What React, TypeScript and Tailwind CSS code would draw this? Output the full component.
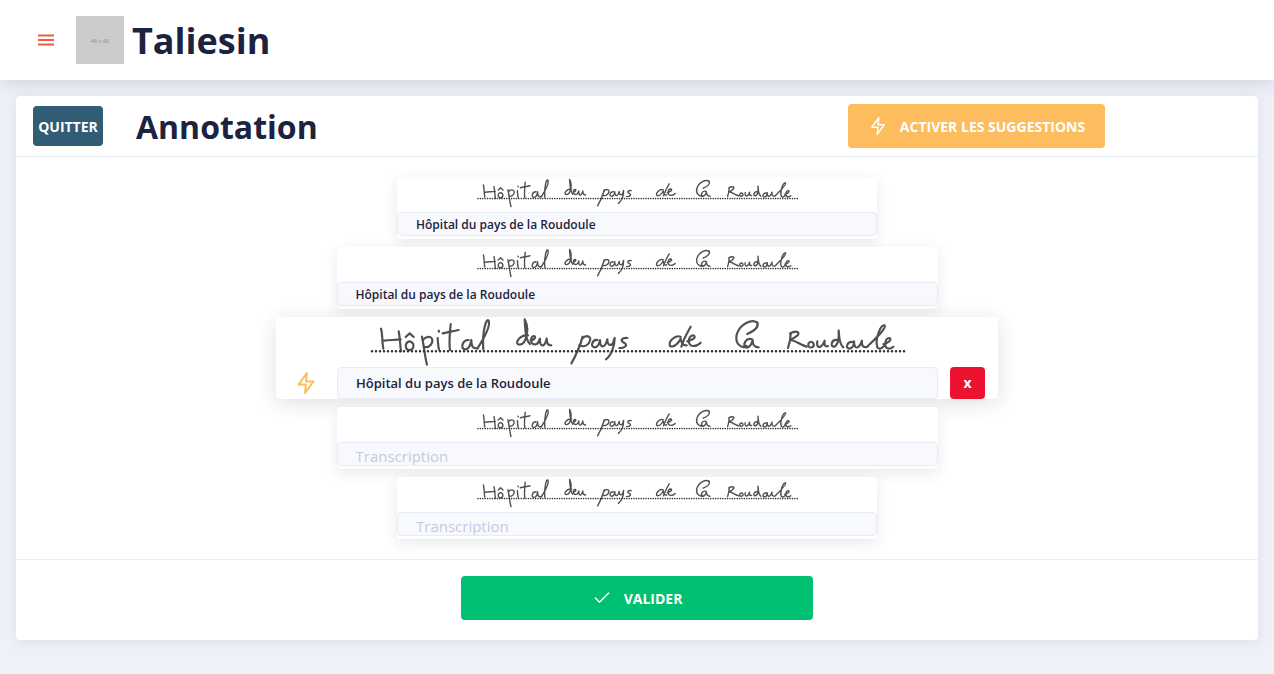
import { Check } from 'lucide-react'

const font = { fontFamily: '"Open Sans", sans-serif' }

// the scanned handwriting of the reference is a picture, so it is sketched as pen strokes
const leftStrokes = [
  'M33 38C38 55 36 80 40 98',
  'M42 74C58 72 74 72 92 70',
  'M86 46C90 65 90 85 93 106',
  'M107 63L119 52L131 63',
  'M118 76C103 80 104 104 120 102C134 100 134 78 118 76',
  'M156 62C162 90 164 120 171 146',
  'M158 72C172 56 192 62 186 80C182 92 170 96 162 92',
  'M203 66C204 78 204 90 207 101',
  'M206 44L207 47',
  'M242 24C240 50 236 78 240 102',
  'M218 52C234 48 250 46 266 42',
  'M296 72C276 72 270 100 286 100C298 100 302 84 304 72C304 86 306 100 322 96',
  'M322 98C340 70 362 30 356 14C348 4 336 50 340 100',
  'M474 58C446 56 432 86 448 86C462 86 470 66 472 40C472 28 468 18 464 10C466 40 466 70 480 84',
  'M482 72C492 74 500 62 492 60C478 60 480 92 500 84C504 82 508 74 510 68C510 80 510 90 520 88C526 84 528 76 530 68C530 78 532 88 544 88',
  'M638 62C630 90 616 122 604 142',
  'M636 68C650 54 670 62 656 82C648 92 636 92 628 88',
  'M682 72C666 70 660 94 674 94C684 94 688 82 690 72C690 84 692 94 702 90C708 86 710 78 712 70C712 82 716 92 728 84C732 74 732 68 734 66C734 90 724 118 708 130',
  'M772 66C760 64 746 72 762 80C774 86 768 96 748 96',
]

const rightStrokes = [
  'M152 32C142 50 130 70 124 92',
  'M122 62C104 56 84 78 90 90C100 96 116 82 122 68C124 82 130 90 140 88',
  'M142 76C156 72 172 64 160 58C144 58 140 90 160 90C168 90 176 86 182 80',
  'M352 20C336 8 300 22 290 56C284 84 306 100 320 90',
  'M352 20C358 34 340 46 322 54',
  'M336 70C318 64 308 84 316 94C326 98 336 84 338 72C338 84 340 94 356 94',
  'M452 54C452 68 448 84 444 96',
  'M450 52C468 42 486 48 468 62C462 66 454 70 450 72C466 72 482 88 500 92',
  'M512 78C500 80 504 98 516 94C526 90 520 76 512 78',
  'M532 76C530 86 532 96 542 92C548 88 552 80 554 74C552 84 554 94 564 90',
  'M590 72C574 70 570 94 582 92C592 90 598 70 596 44C598 60 596 82 610 94',
  'M638 78C622 76 614 96 628 98C638 98 642 86 642 76C642 88 646 100 656 92C662 86 664 80 666 74C664 86 668 98 682 92',
  'M684 90C708 66 740 36 734 28C722 24 704 70 712 94C718 102 726 96 732 90',
  'M730 84C744 82 758 70 748 66C734 66 730 96 746 98C752 98 756 96 760 92',
]

function Handwriting({ big }: { big?: boolean }) {
  return (
    <svg
      viewBox="-9 3 1620 150"
      role="img"
      aria-label="Ligne manuscrite"
      className={big ? 'h-[50px] w-[540px] shrink-0 blur-[0.7px]' : 'mt-px h-[30px] w-[324px] shrink-0 blur-[0.4px]'}
    >
      <g fill="none" stroke="#505050" strokeLinecap="round" strokeLinejoin="round" strokeWidth={big ? 6.5 : 7}>
        {leftStrokes.map((d) => (
          <path key={d} d={d} />
        ))}
        <g transform="translate(810 0)">
          {rightStrokes.map((d) => (
            <path key={d} d={d} />
          ))}
        </g>
        <path d="M6 106H1606" stroke="#333333" strokeWidth={big ? 7.5 : 8} strokeDasharray="0 12" />
      </g>
    </svg>
  )
}

function Bolt({ className }: { className: string }) {
  return (
    <svg viewBox="0 0 24 24" fill="none" stroke="currentColor" strokeLinejoin="round" strokeLinecap="round" className={className}>
      <path d="M13 2L4.5 13.5H12L11 22L19.5 10.5H12Z" />
    </svg>
  )
}

function SmallRow({ width, value }: { width: string; value?: string }) {
  return (
    <div className={`${width} h-[62px] shrink-0 rounded bg-white shadow-[0_4px_14px_rgba(28,37,65,0.1)]`}>
      <div className="flex h-[35px] justify-center overflow-hidden">
        <Handwriting />
      </div>
      <input
        readOnly
        value={value ?? ''}
        placeholder="Transcription"
        className={
          value
            ? 'block h-6 w-full rounded border border-[#e9ecf6] bg-[#f8f9fd] pl-[18px] text-xs font-semibold text-[#1c2340] outline-none'
            : 'block h-6 w-full rounded border border-[#e9ecf6] bg-[#f8f9fd] pl-[18px] pt-1 text-[15px] text-[#1c2340] outline-none placeholder:text-[#c3cbdf]'
        }
      />
    </div>
  )
}

export default function App() {
  const line = 'Hôpital du pays de la Roudoule'

  return (
    <div style={font} className="min-h-screen bg-[#eef1f8] text-[#1c2340]">
      <header className="flex h-20 items-center bg-white pl-[38px] shadow-[0_2px_18px_rgba(28,37,65,0.16)]">
        <svg viewBox="0 0 16 12" className="h-3 w-4" fill="none" stroke="#f25c45" strokeWidth="2">
          <path d="M0 1.5H16M0 6H16M0 10.5H16" />
        </svg>
        <div className="ml-[22px] flex h-12 w-12 items-center justify-center bg-[#cccccc] pt-0.5 text-[5.5px] text-[#8f8f8f]">
          48 x 48
        </div>
        <h1 className="ml-2 mt-0.5 text-4xl font-bold">Taliesin</h1>
      </header>

      <main className="mx-4 mt-4 h-[544px] rounded bg-white shadow-[0_2px_12px_rgba(28,37,65,0.08)]">
        <div className="flex h-[61px] items-center border-b border-[#eceef6] pl-[17px] pr-[153px]">
          <button className="h-10 w-[70px] rounded bg-[#305c76] pt-0.5 text-sm font-bold text-white">QUITTER</button>
          <h2 className="ml-[33px] mt-0.5 text-[32px] font-bold">Annotation</h2>
          <button className="ml-auto flex h-11 w-[257px] items-center justify-center gap-3 rounded bg-[#fdbc5d] pt-0.5 text-sm font-bold text-white">
            <Bolt className="h-5 w-5 -translate-y-px stroke-[1.7]" />
            ACTIVER LES SUGGESTIONS
          </button>
        </div>

        <div className="flex h-[403px] flex-col items-center gap-2 border-b border-[#eceef6] pt-5">
          <SmallRow width="w-[480px]" value={line} />
          <SmallRow width="w-[601px]" value={line} />
          <div className="h-[82px] w-[722px] shrink-0 rounded bg-white shadow-[0_4px_20px_rgba(28,37,65,0.14)]">
            <div className="flex h-[50px] justify-center overflow-hidden">
              <Handwriting big />
            </div>
            <div className="flex items-center pr-[13px]">
              <div className="flex w-[61px] justify-center">
                <Bolt className="h-6 w-6 -translate-x-px stroke-2 text-[#fdbc5d]" />
              </div>
              <input
                readOnly
                value={line}
                className="h-8 w-[601px] rounded border border-[#e9ecf6] bg-[#f8f9fd] pl-[18px] text-[13px] font-semibold text-[#1c2340] outline-none"
              />
              <button className="ml-3 h-8 w-[35px] rounded bg-[#ec1331] text-sm font-bold text-white">x</button>
            </div>
          </div>
          <SmallRow width="w-[601px]" />
          <SmallRow width="w-[480px]" />
        </div>

        <div className="flex justify-center pt-4">
          <button className="flex h-11 w-[352px] items-center justify-center gap-3 rounded bg-[#00c072] pt-0.5 text-sm font-bold text-white">
            <Check size={20} strokeWidth={1.7} className="-translate-y-px" />
            VALIDER
          </button>
        </div>
      </main>
    </div>
  )
}
